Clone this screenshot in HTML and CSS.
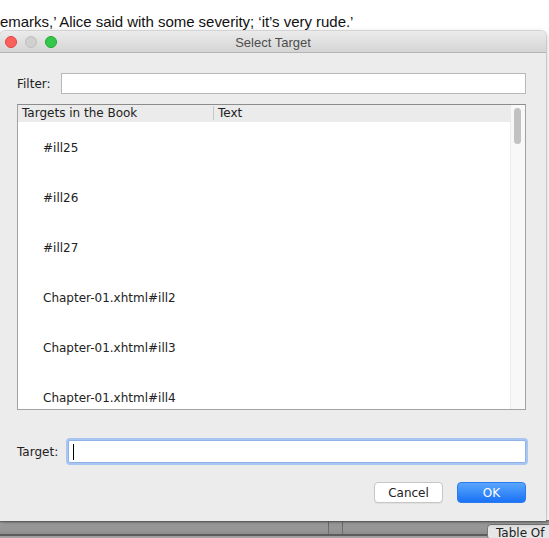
FILE: index.html
```html
<!DOCTYPE html>
<html>
<head>
<meta charset="utf-8">
<link rel="stylesheet" href="styles.css">
</head>
<body>
<div class="desktop">
  <p class="bgtext">emarks,’ Alice said with some severity; ‘it’s very rude.’</p>
  <div class="behind">
    <div class="behind-sep s1"></div>
    <div class="behind-sep s2"></div>
    <div class="behind-line"></div>
    <div class="behind-tab">Table Of</div>
  </div>
  <div class="dialog">
    <div class="titlebar">
      <div class="lights">
        <span class="light red"></span>
        <span class="light gray"></span>
        <span class="light green"></span>
      </div>
      <div class="title">Select Target</div>
    </div>
    <div class="body">
      <div class="filter-row">
        <label class="label">Filter:</label>
        <div class="input"></div>
      </div>
      <div class="table">
        <div class="table-main">
          <div class="thead">
            <div class="th th1">Targets in the Book</div>
            <div class="th th2">Text</div>
          </div>
          <div class="rows">
            <div class="row">#ill25</div>
            <div class="row">#ill26</div>
            <div class="row">#ill27</div>
            <div class="row">Chapter-01.xhtml#ill2</div>
            <div class="row">Chapter-01.xhtml#ill3</div>
            <div class="row">Chapter-01.xhtml#ill4</div>
          </div>
        </div>
        <div class="scroll">
          <div class="thumb"></div>
        </div>
      </div>
      <div class="target-row">
        <label class="label">Target:</label>
        <div class="input focus"><span class="caret"></span></div>
      </div>
      <div class="buttons">
        <button class="btn cancel">Cancel</button>
        <button class="btn ok">OK</button>
      </div>
    </div>
  </div>
</div>
</body>
</html>
```

FILE: styles.css
```css
* { box-sizing: border-box; }
html, body { margin: 0; padding: 0; }
body { width: 549px; height: 538px; overflow: hidden; background: #ffffff; }
.desktop { position: relative; width: 549px; height: 538px; overflow: hidden; background: #fff; }
.bgtext {
  margin: 0;
  padding: 13px 0 0 0;
  font-family: "Liberation Sans", Arial, sans-serif;
  font-size: 15px;
  line-height: 18px;
  color: #111;
  white-space: nowrap;
  letter-spacing: -0.03px;
}
.behind {
  position: absolute;
  left: 0; top: 520px; width: 549px; height: 18px;
  background: linear-gradient(#6a6a6a, #a3a3a3 20%, #8e8e8e 75%, #a8a8a8);
}
.behind-line { position: absolute; left: 0; right: 0; top: 14px; height: 2px; background: #5c5c5c; }
.behind-sep { position: absolute; top: 0; height: 14px; width: 1px; background: #6e6e6e; }
.s1 { left: 328px; }
.s2 { left: 342px; }
.behind-tab {
  position: absolute; left: 487px; top: 4px; width: 70px; height: 16px;
  background: #e6e6e6; border: 1px solid #777; border-radius: 4px 0 0 4px;
  font-family: "DejaVu Sans", sans-serif; font-size: 12px; line-height: 16px;
  color: #222; padding-left: 8px; overflow: hidden; white-space: nowrap;
}
.dialog {
  position: absolute;
  left: 0; top: 31px; width: 546px; height: 490px;
  background: #ececec;
  border-radius: 5px 5px 0 0;
  box-shadow: 0 0 0 1px rgba(0,0,0,0.12), 0 2px 6px rgba(0,0,0,0.25);
  font-family: "DejaVu Sans", Verdana, sans-serif;
  font-size: 12px;
  color: #222;
}
.titlebar {
  height: 22px;
  display: flex;
  align-items: center;
  position: relative;
  background: linear-gradient(#ebebeb, #d5d5d5);
  border-bottom: 1px solid #b3b3b3;
  border-radius: 5px 5px 0 0;
}
.lights { display: flex; gap: 8px; padding-left: 5px; }
.light { width: 12px; height: 12px; border-radius: 50%; display: block; }
.red { background: #fc605c; border: 1px solid #e0443e; }
.gray { background: #d0d0d0; border: 1px solid #c0c0c0; }
.green { background: #34c84a; border: 1px solid #1daa2c; }
.title {
  position: absolute; left: 0; right: 0; top: 1px; height: 22px;
  text-align: center; line-height: 22px;
  font-family: "Liberation Sans", Arial, sans-serif;
  font-size: 13px; color: #4d4d4d;
}
.body { padding: 20px 20px 0 17px; }
.filter-row { display: flex; align-items: center; height: 21px; }
.label { font-size: 12px; color: #222; }
.filter-row .label { width: 44px; }
.input {
  flex: 1; height: 21px; background: #fff; border: 1px solid #b8b8b8;
}
.table {
  margin-top: 10px;
  height: 306px;
  border: 1px solid #a2a2a2;
  border-top-color: #8c8c8c;
  display: flex;
  background: #fff;
}
.table-main { flex: 1; display: flex; flex-direction: column; }
.thead { height: 17px; display: flex; background: #ebebeb; }
.th { line-height: 17px; padding-left: 4px; color: #222; }
.th1 { width: 196px; border-right: 1px solid #c8c8c8; margin: 1px 0 2px 0; line-height: 15px; }
.th2 { flex: 1; }
.rows { flex: 1; overflow: hidden; }
.row { height: 50px; line-height: 20px; padding: 16px 0 0 25px; color: #222; }
.scroll { width: 15px; background: #f8f8f8; border-left: 1px solid #ebebeb; padding: 3px 0 0 3px; }
.thumb { width: 7px; height: 36px; background: #c2c2c2; border-radius: 4px; }
.target-row { display: flex; align-items: center; margin-top: 29px; height: 25px; }
.target-row .label { width: 51px; }
.input.focus {
  height: 23px;
  border: 1px solid #8fb3e8;
  box-shadow: 0 0 0 2px #a9c6f2;
  border-radius: 2px;
  padding: 3px 0 0 4px;
  margin-right: 0;
}
.caret { display: block; width: 1px; height: 16px; background: #000; }
.buttons { display: flex; justify-content: flex-end; gap: 14px; margin-top: 18px; padding-right: 0; }
.btn {
  width: 69px; height: 21px;
  font-family: "DejaVu Sans", Verdana, sans-serif;
  font-size: 12px; padding: 0;
  border-radius: 4px;
}
.cancel { background: #fff; border: 1px solid #c6c6c6; color: #222; box-shadow: 0 1px 0 rgba(0,0,0,0.05); }
.ok { background: linear-gradient(#5aa6fc, #1a72f6); border: 1px solid #2a7bf0; color: #fff; }
```
